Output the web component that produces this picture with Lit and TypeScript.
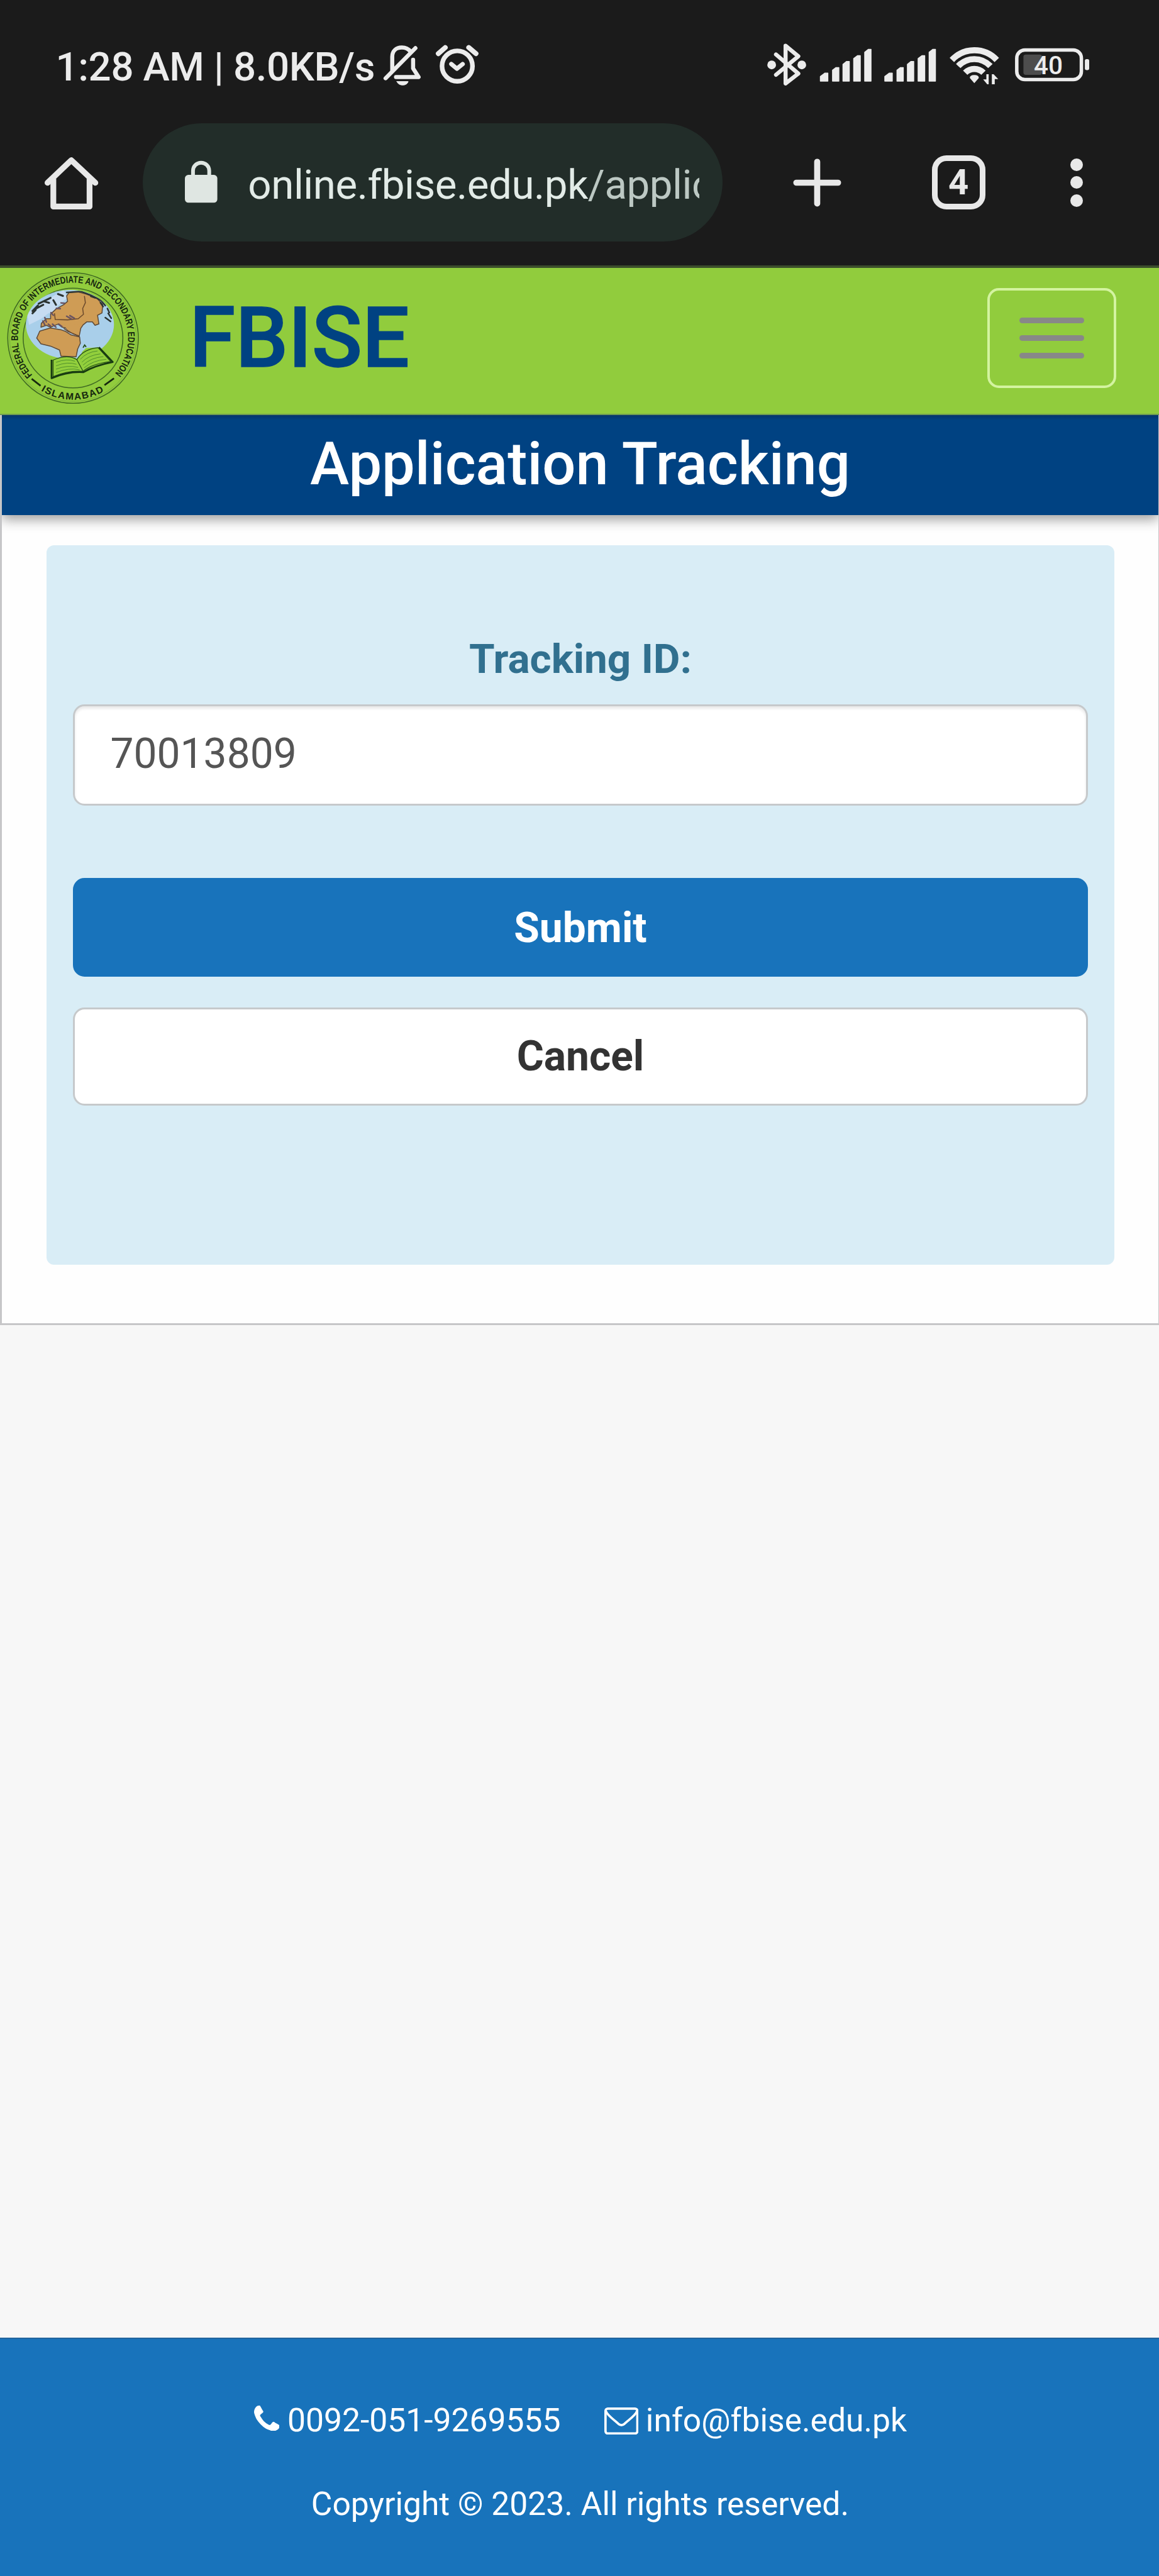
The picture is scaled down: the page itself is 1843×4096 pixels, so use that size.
import { LitElement, html, css, svg, unsafeCSS } from "lit";
import { customElement, property } from "lit/decorators.js";

/** Design units to rendered pixels. */
const SCALE = 0.9215;
const u = (n: number) => unsafeCSS(`${(n * SCALE).toFixed(2)}px`);

@customElement("status-bar")
class StatusBar extends LitElement {
  static styles = css`
    :host {
      display: block;
      box-sizing: border-box;
      height: ${u(213)};
      padding: ${u(64)} ${u(112)} 0 ${u(96)};
      color: #ececec;
    }
    .row {
      display: flex;
      justify-content: space-between;
      height: ${u(96)};
    }
    .left {
      display: flex;
    }
    .clock {
      font-size: ${u(69)};
      line-height: ${u(105)};
      font-weight: 500;
      letter-spacing: ${u(-0.4)};
      white-space: pre;
      width: ${u(558)};
    }
    .alerts {
      width: ${u(180)};
      height: ${u(96)};
    }
    .system {
      width: ${u(568)};
      height: ${u(96)};
    }
    .level {
      font-family: Roboto, sans-serif;
      font-size: 44px;
      font-weight: 500;
    }
  `;

  private signal(dx: number) {
    return svg`<g transform="translate(${dx} 0)" fill="#ececec" stroke="#ececec" stroke-width="1.5" stroke-linejoin="round">
      <path d="M1416 140V132L1424 126H1429V140Z"/>
      <path d="M1437 140V121L1443 116.500H1448V140Z"/>
      <path d="M1455 140V111L1461 106H1466V140Z"/>
      <path d="M1473.500 140V101L1480 96H1485V140Z"/>
      <path d="M1492.500 140V90L1499 85H1503.500V140Z"/>
    </g>`;
  }

  render() {
    return html`<div class="row">
      <div class="left">
        <span class="clock">1:28 AM | 8.0KB/s</span>
        <svg class="alerts" viewBox="654 64 180 96" fill="none" stroke="#ececec" stroke-linecap="round" stroke-linejoin="round">
          <g stroke-width="7">
            <path d="M716.500 83L665 135"/>
            <path d="M676.500 121V98C676.500 88 683 82 693 82C699.500 82 704.500 84.500 708 89"/>
            <path d="M712.500 103V118L722 133H683"/>
          </g>
          <path d="M684.500 140.500H704C702 149 687 149 684.500 140.500Z" fill="#ececec" stroke-width="1"/>
          <circle cx="788.700" cy="114" r="26.300" stroke-width="8"/>
          <path d="M778.500 110.500L788 118.500L798 110.500" stroke-width="7.500"/>
          <path d="M756 92.500L768 82M808.500 82L821 92.500" stroke-width="8.500"/>
        </svg>
      </div>
      <svg class="system" viewBox="1320 64 568 96">
        <g fill="none" stroke="#ececec" stroke-linejoin="round" stroke-linecap="round">
          <path d="M1339.500 94L1378 127L1356 144V79L1378 97L1339.500 129" stroke-width="7"/>
        </g>
        <circle cx="1332" cy="112" r="7.500" fill="#ececec"/>
        <circle cx="1384" cy="112" r="7.500" fill="#ececec"/>
        ${this.signal(0)} ${this.signal(111.2)}
        <g fill="none" stroke="#ececec" stroke-width="10.500">
          <path d="M1643 103.500A53 53 0 0 1 1720.500 103.500"/>
          <path d="M1654 114A38 38 0 0 1 1709.500 114"/>
          <path d="M1666 125.500A22 22 0 0 1 1697.500 125.500"/>
        </g>
        <path d="M1674 134.500Q1674 129.500 1681.700 129.500Q1689.500 129.500 1689.500 134.500L1681.700 143.500Z" fill="#ececec"/>
        <path d="M1706.500 128V145.500H1704L1697 137H1702.500V128ZM1712 145.500V128H1715L1723 136.500H1717V145.500Z" fill="#ececec"/>
        <rect x="1755" y="86.300" width="111.500" height="51" rx="14" fill="none" stroke="#ececec" stroke-width="6"/>
        <rect x="1766.500" y="94" width="32" height="35" rx="4" fill="#4d4d4d"/>
        <rect x="1872.500" y="102" width="7.500" height="19" rx="3" fill="#ececec"/>
        <text class="level" x="1809.500" y="128" text-anchor="middle" fill="#ececec">40</text>
      </svg>
    </div>`;
  }
}

@customElement("browser-toolbar")
class BrowserToolbar extends LitElement {
  @property() host = "online.fbise.edu.pk";
  @property() path = "/applic";
  @property({ type: Number }) tabs = 4;

  static styles = css`
    :host {
      display: flex;
      box-sizing: border-box;
      height: ${u(245)};
      padding: 0 ${u(130)} ${u(41)} ${u(70)};
      align-items: center;
    }
    .home {
      width: ${u(106)};
      height: ${u(110)};
    }
    .pill {
      display: flex;
      box-sizing: border-box;
      align-items: center;
      width: ${u(1001)};
      height: ${u(204)};
      margin-left: ${u(70)};
      padding: 0 ${u(40)} 0 ${u(73)};
      border-radius: ${u(102)};
      background: #222d29;
    }
    .lock {
      flex: none;
      width: ${u(56)};
      height: ${u(76)};
      margin-right: ${u(53)};
    }
    .url {
      flex: 1;
      overflow: hidden;
      white-space: nowrap;
      font-size: ${u(71)};
      line-height: ${u(96)};
      padding-top: ${u(8)};
      letter-spacing: ${u(-0.5)};
      color: #e2ebe7;
    }
    .path {
      color: #bcc8c3;
    }
    .plus {
      width: ${u(90)};
      height: ${u(90)};
      margin-left: ${u(118)};
    }
    .tabs {
      display: grid;
      place-items: center;
      box-sizing: border-box;
      width: ${u(92)};
      height: ${u(93)};
      margin-left: ${u(153)};
      border: ${u(10)} solid #e8e8e8;
      border-radius: ${u(25)};
      color: #e8e8e8;
      font-size: ${u(61)};
      line-height: ${u(73)};
      font-weight: 700;
    }
    .menu {
      display: flex;
      flex-direction: column;
      gap: ${u(9)};
      margin-left: ${u(147)};
    }
    .dot {
      width: ${u(22)};
      height: ${u(22)};
      border-radius: 50%;
      background: #e8e8e8;
    }
  `;

  render() {
    return html`
      <svg class="home" viewBox="70 260 106 110" fill="none" stroke="#e8e8e8" stroke-width="10" stroke-linejoin="round" stroke-linecap="round">
        <path d="M81.500 315L122.500 276L164 315"/>
        <path d="M91.500 308V356H154V308" stroke-linecap="butt"/>
      </svg>
      <div class="pill">
        <svg class="lock" viewBox="319 277 56 76">
          <path d="M333 306V295A14 14 0 0 1 361 295V306" fill="none" stroke="#dfe6e2" stroke-width="6.500"/>
          <rect x="319" y="302" width="56" height="48" rx="6" fill="#dfe6e2"/>
        </svg>
        <div class="url">${this.host}<span class="path">${this.path}</span></div>
      </div>
      <svg class="plus" viewBox="1365 270 90 90" fill="none" stroke="#e8e8e8" stroke-width="10.500" stroke-linecap="round">
        <path d="M1374 315H1446M1410 279V351"/>
      </svg>
      <div class="tabs">${this.tabs}</div>
      <div class="menu"><i class="dot"></i><i class="dot"></i><i class="dot"></i></div>
    `;
  }
}

@customElement("board-seal")
class BoardSeal extends LitElement {
  static styles = css`
    :host {
      display: block;
      width: ${u(250)};
      height: ${u(250)};
    }
    .seal {
      display: block;
      width: 100%;
      height: 100%;
    }
    .ring {
      font-family: "Liberation Sans", Arial, sans-serif;
      font-weight: 700;
      font-size: 50px;
      fill: #16280f;
    }
  `;

  render() {
    return html`<svg class="seal" viewBox="0 5 750 750">
      <defs>
        <path id="upper" d="M168 559A285 285 0 1 1 588 559"/>
        <path id="lower" d="M212 641A319 319 0 0 0 543 641"/>
        <clipPath id="globe"><ellipse cx="362" cy="298" rx="228" ry="179"/></clipPath>
      </defs>
      <g fill="none" stroke="#3f6a23">
        <circle cx="378" cy="368" r="338" stroke-width="5"/>
        <circle cx="378" cy="368" r="328" stroke-width="2" stroke="#6c9c3c"/>
        <circle cx="378" cy="368" r="258" stroke-width="5"/>
      </g>
      <text class="ring"><textPath href="#upper" textLength="1308" lengthAdjust="spacingAndGlyphs">FEDERAL BOARD OF INTERMEDIATE AND SECONDARY EDUCATION</textPath></text>
      <text class="ring"><textPath href="#lower" textLength="342" lengthAdjust="spacing">ISLAMABAD</textPath></text>
      <path d="M164 579L210 615M541 612L590 577" stroke="#16280f" stroke-width="9"/>
      <g clip-path="url(#globe)">
        <rect x="130" y="115" width="465" height="365" fill="#a9cfea"/>
        <path d="M210 190L330 120L350 160L300 200L280 230L250 240L210 270L150 300L140 240Z" fill="#c6dcf2"/>
        <g fill="#cf9c55" stroke="#5d4a39" stroke-width="5" stroke-linejoin="round">
          <path d="M345 150L358 132L400 128L445 140L500 160L532 195L528 238L505 250L512 295L492 302L478 284L450 284L430 300L418 318L410 358L385 348L352 330L340 316L322 312L300 296L280 304L262 312L240 302L212 312L214 292L240 268L262 268L262 244L290 218L330 195L350 178Z"/>
          <path d="M206 332L260 316L318 326L340 334L368 352L412 362L416 395L402 425L394 465L316 462L308 430L262 410L212 398L190 368Z"/>
        </g>
        <path d="M330 296L352 290L408 300L414 320L408 352L372 340L345 322Z" fill="#cf9c55"/>
        <path d="M437 150L442 185L428 215L432 245L405 268L350 274L286 272L282 240M330 318L352 334L408 358" fill="none" stroke="#6c4a2c" stroke-width="5"/>
        <g fill="none" stroke="#2c3432" stroke-linecap="round">
          <path d="M168 240L185 222M186 215L224 196M200 190L262 160M226 178L254 186M276 172L290 196M300 140L326 150M168 228L196 200" stroke-width="10"/>
          <path d="M345 132L420 127L470 146L522 172L545 200M556 215L566 236M545 262L572 282M560 240L576 265M470 152L492 160M520 185L534 205" stroke-width="8"/>
          <path d="M232 262L240 285M264 236L276 250M222 280L232 300M272 296L290 312M304 296L320 308M250 296L262 306M292 214L312 216M316 186L334 188M345 255L370 270M362 252L385 266" stroke-width="8" stroke="#6a5361"/>
        </g>
      </g>
      <path d="M262 480L340 465L390 470L415 492L425 440L445 420L510 416L585 492L500 515L430 545L350 555L264 580Z" fill="#92cf3c"/>
      <path d="M275 482Q350 450 398 480L430 540Q350 535 275 568ZM398 480Q430 425 508 418L574 490Q480 500 430 540" fill="#92cf3c" stroke="#234c14" stroke-width="4"/>
      <path d="M267 480V576Q350 540 432 545Q490 510 584 492L512 416" fill="none" stroke="#173a11" stroke-width="9" stroke-linejoin="round"/>
      <path d="M290 494Q345 472 388 488M290 512Q350 488 396 504M290 529Q350 506 404 520M290 547Q355 520 412 532M416 478Q450 440 505 435M424 493Q460 456 520 450M430 508Q470 470 535 464M436 522Q480 484 550 478" fill="none" stroke="#4a8a2a" stroke-width="3"/>
      <path d="M430 418L438 404L446 414" fill="none" stroke="#234c14" stroke-width="6"/>
    </svg>`;
  }
}

@customElement("site-header")
class SiteHeader extends LitElement {
  static styles = css`
    :host {
      display: flex;
      box-sizing: border-box;
      height: ${u(254)};
      padding-right: ${u(74)};
      background: #91cc3d;
      border-bottom: ${u(3)} solid #6f9b52;
    }
    .brand {
      flex: 1;
      margin-left: ${u(77)};
      color: #004282;
      font-size: ${u(144)};
      line-height: ${u(243)};
      font-weight: 500;
      -webkit-text-stroke: ${u(1.5)} #004282;
    }
    .toggle {
      display: flex;
      flex-direction: column;
      align-items: center;
      justify-content: center;
      gap: ${u(20)};
      box-sizing: border-box;
      width: ${u(222)};
      height: ${u(172)};
      margin-top: ${u(35)};
      padding: 0;
      background: none;
      border: ${u(4.5)} solid #d3f3a0;
      border-radius: ${u(20)};
    }
    .bar {
      width: ${u(112)};
      height: ${u(10.5)};
      border-radius: ${u(5)};
      background: #888888;
    }
  `;

  render() {
    return html`
      <board-seal></board-seal>
      <div class="brand">FBISE</div>
      <button class="toggle" aria-label="Menu">
        <span class="bar"></span><span class="bar"></span><span class="bar"></span>
      </button>
    `;
  }
}

@customElement("tracking-form")
class TrackingForm extends LitElement {
  @property() trackingId = "70013809";

  static styles = css`
    :host {
      display: block;
      box-sizing: border-box;
      height: ${u(1570)};
      background: #fefefe;
      border: solid #c6c6c8;
      border-width: 0 ${u(2)} ${u(4)} ${u(4)};
    }
    .title {
      height: ${u(172)};
      line-height: ${u(170)};
      text-align: center;
      font-size: ${u(101.8)};
      font-weight: 500;
      color: #fff;
      background: linear-gradient(#06346a, #004282 ${u(9)});
      box-shadow: 0 ${u(8)} ${u(20)} rgba(0, 0, 0, 0.38);
      clip-path: inset(0 0 ${u(-40)} 0);
    }
    .panel {
      display: flex;
      flex-direction: column;
      box-sizing: border-box;
      height: ${u(1241)};
      margin: ${u(53)} ${u(76)} 0 ${u(77)};
      padding: ${u(156)} ${u(46)} 0;
      border-radius: ${u(13)};
      background: #d9edf6;
    }
    .label {
      line-height: ${u(80)};
      margin-bottom: ${u(38)};
      text-align: center;
      color: #31708f;
      font-size: ${u(71.2)};
      font-weight: 700;
    }
    .field,
    .btn {
      display: block;
      box-sizing: border-box;
      width: 100%;
      margin: 0;
      border: ${u(3.5)} solid #c6c9cb;
      border-radius: ${u(20)};
      background: #fff;
      font-family: inherit;
      font-size: ${u(71.5)};
      outline: none;
    }
    .field {
      height: ${u(175)};
      padding: 0 ${u(61)} ${u(4)};
      margin-bottom: ${u(125)};
      color: #555;
      box-shadow: inset 0 ${u(4)} ${u(5)} rgba(0, 0, 0, 0.09);
    }
    .btn {
      height: ${u(170)};
      padding: 0;
      line-height: ${u(160)};
      font-weight: 700;
      color: #333;
    }
    .primary {
      margin-bottom: ${u(53)};
      padding-top: ${u(2)};
      background: #1873bb;
      border-color: #1873bb;
      color: #fff;
    }
  `;

  render() {
    return html`
      <div class="title">Application Tracking</div>
      <div class="panel">
        <label class="label" for="tracking">Tracking ID:</label>
        <input class="field" id="tracking" .value=${this.trackingId} />
        <button class="btn primary">Submit</button>
        <button class="btn">Cancel</button>
      </div>
    `;
  }
}

@customElement("site-footer")
class SiteFooter extends LitElement {
  static styles = css`
    :host {
      display: block;
      box-sizing: border-box;
      height: ${u(411)};
      padding-top: ${u(101)};
      border-top: ${u(3)} solid #22649c;
      background: #1873bb;
      color: #fff;
      font-size: ${u(56)};
    }
    .contacts {
      display: flex;
      justify-content: center;
      align-items: center;
      height: ${u(80)};
      line-height: ${u(80)};
      padding-left: ${u(3)};
    }
    .phone {
      width: ${u(44)};
      height: ${u(44)};
      margin-right: ${u(14)};
      padding-bottom: ${u(9)};
    }
    .mail {
      width: ${u(59)};
      height: ${u(47)};
      margin: 0 ${u(13)} 0 ${u(75)};
    }
    .copy {
      margin-top: ${u(64)};
      padding-left: ${u(2)};
      line-height: ${u(80)};
      text-align: center;
    }
  `;

  render() {
    return html`
      <div class="contacts">
        <svg class="phone" viewBox="0 0 1408 1408" fill="#fff">
          <path d="M1408 1112q0 27-10 70.500t-21 68.500q-21 50-122 106-94 51-186 51-27 0-53-3.500t-57.500-12.500-47-14.500-55.500-20.500-49-18q-98-35-175-83-127-79-264-216t-216-264q-48-77-83-175-3-9-18-49t-20.500-55.500-14.500-47-12.500-57.500-3.500-53q0-92 51-186 56-101 106-122 25-11 68.500-21t70.500-10q14 0 21 3 18 6 53 76 11 19 30 54t35 63.500 31 53.500q3 4 17.500 25t21.500 35.500 7 28.500q0 20-28.500 50t-62 55-62 53-28.500 46q0 9 5 22.500t8.500 20.500 14 24 11.500 19q76 137 174 235t235 174q2 1 19 11.500t24 14 20.500 8.500 22.500 5q18 0 46-28.500t53-62 55-62 50-28.500q14 0 28.500 7t35.500 21.500 25 17.500q25 15 53.500 31t63.500 35 54 30q70 35 76 53 3 7 3 21z"/>
        </svg>
        <span>0092-051-9269555</span>
        <svg class="mail" viewBox="0 0 59 47" fill="none" stroke="#fff" stroke-width="4">
          <rect x="2" y="2" width="55" height="43" rx="4"/>
          <path d="M2.500 6C5 14 18 22 24 28Q29.500 33 35 28C41 22 54 14 56.500 6" stroke-linejoin="round"/>
        </svg>
        <span>info@fbise.edu.pk</span>
      </div>
      <div class="copy">Copyright © 2023. All rights reserved.</div>
    `;
  }
}

@customElement("app-root")
class AppRoot extends LitElement {
  static styles = css`
    :host {
      display: flex;
      flex-direction: column;
      width: 1843px;
      height: 4096px;
      overflow: hidden;
      background: #f7f7f7;
      font-family: Roboto, "Liberation Sans", sans-serif;
    }
    .chrome {
      background: #1b1b1b;
      border-bottom: ${u(5)} solid #3c4e2c;
    }
    .grow {
      flex: 1;
    }
  `;

  render() {
    return html`
      <div class="chrome">
        <status-bar></status-bar>
        <browser-toolbar></browser-toolbar>
      </div>
      <site-header></site-header>
      <tracking-form></tracking-form>
      <div class="grow"></div>
      <site-footer></site-footer>
    `;
  }
}
